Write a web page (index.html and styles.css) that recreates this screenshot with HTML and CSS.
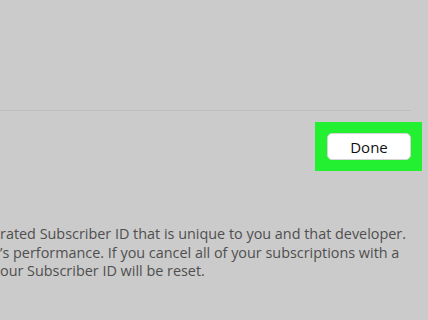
FILE: index.html
```html
<!DOCTYPE html>
<html>
<head>
<meta charset="utf-8">
<link rel="stylesheet" href="styles.css">
</head>
<body>
<div class="page">
  <div class="top"></div>
  <div class="divider"></div>
  <div class="actions">
    <div class="highlight">
      <button class="done">Done</button>
    </div>
  </div>
  <div class="info">
    <div class="line">rated Subscriber ID that is unique to you and that developer.</div>
    <div class="line">’s performance. If you cancel all of your subscriptions with a</div>
    <div class="line">our Subscriber ID will be reset.</div>
  </div>
</div>
</body>
</html>
```

FILE: styles.css
```css
html, body {
  margin: 0;
  padding: 0;
  background: #cbcbcb;
  overflow: hidden;
}
.page {
  width: 428px;
  height: 320px;
  font-family: "Open Sans", "Noto Sans", sans-serif;
}
.top {
  height: 110px;
}
.divider {
  width: 411px;
  height: 1px;
  background: #bdbdbd;
}
.actions {
  display: flex;
  justify-content: flex-end;
  padding-top: 11px;
  padding-right: 6px;
}
.highlight {
  background: #22f030;
  padding: 11px 11px 11px 12px;
  width: 84px;
  height: 27px;
}
.done {
  display: block;
  box-sizing: border-box;
  width: 84px;
  height: 27px;
  margin: 0;
  padding: 0;
  background: #ffffff;
  border: 1px solid #d4d4d4;
  border-radius: 5px;
  font-family: "Open Sans", "Noto Sans", sans-serif;
  font-size: 15px;
  color: #111;
}
.info {
  padding-top: 54px;
  color: #4f4f4f;
  font-size: 14.4px;
  line-height: 18.5px;
}
.line {
  white-space: nowrap;
}
```
